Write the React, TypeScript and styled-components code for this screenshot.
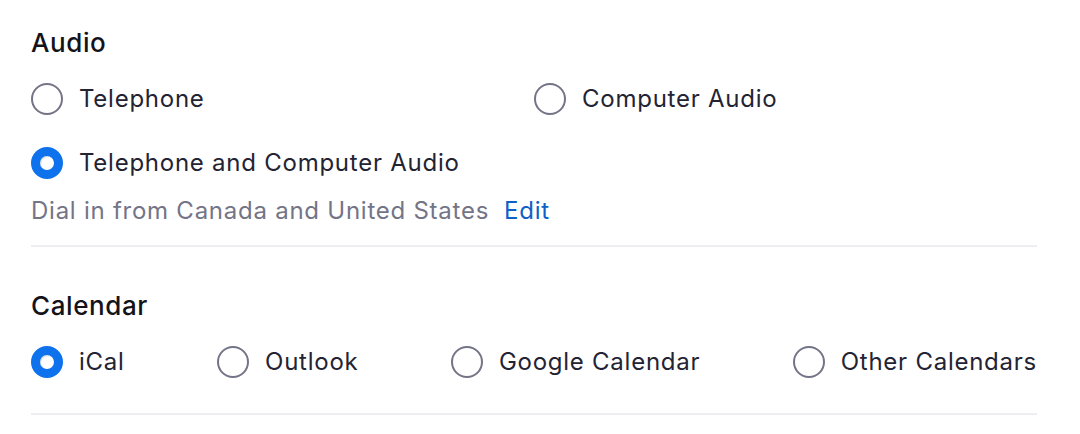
import styled, { createGlobalStyle } from "styled-components";

const GlobalStyle = createGlobalStyle`
	body {
		margin: 0;
		background: #ffffff;
		font-family: Inter, "Liberation Sans", sans-serif;
		color: #232333;
	}
`;

type RadioPropsType = {
	label: string;
	checked?: boolean;
};

const Radio = (props: RadioPropsType) => {
	return (
		<Option>
			<Circle $checked={!!props.checked} />
			<Label>{props.label}</Label>
		</Option>
	);
};

export default function App() {
	return (
		<>
			<GlobalStyle />
			<Page>
				<Section>
					<Heading>Audio</Heading>
					<AudioGrid>
						<Radio label="Telephone" />
						<Radio label="Computer Audio" />
						<Radio label="Telephone and Computer Audio" checked />
					</AudioGrid>
					<Note>
						Dial in from Canada and United States
						<EditLink href="#">Edit</EditLink>
					</Note>
				</Section>
				<Section>
					<Heading>Calendar</Heading>
					<CalendarRow>
						<Radio label="iCal" checked />
						<Radio label="Outlook" />
						<Radio label="Google Calendar" />
						<Radio label="Other Calendars" />
					</CalendarRow>
				</Section>
			</Page>
		</>
	);
}

const Page = styled.div`
	width: 1006px;
	padding: 27px 0 0 31px;
`;

const Section = styled.section`
	border-bottom: 2px solid #ededf4;
	padding-bottom: 18px;
	& + & {
		padding-top: 43px;
		padding-bottom: 35px;
	}
`;

const Heading = styled.h2`
	margin: 0 0 24px;
	font-size: 26px;
	font-weight: 500;
	line-height: 32px;
	letter-spacing: 0.6px;
	color: #131319;
`;

const AudioGrid = styled.div`
	display: grid;
	grid-template-columns: 1fr 1fr;
	row-gap: 32px;
`;

const CalendarRow = styled.div`
	display: flex;
	justify-content: space-between;
`;

const Option = styled.label`
	display: flex;
	align-items: center;
	gap: 16px;
	height: 32px;
	cursor: pointer;
`;

const Circle = styled.span<{ $checked: boolean }>`
	box-sizing: border-box;
	flex: none;
	width: 32px;
	height: 32px;
	border-radius: 50%;
	background: #ffffff;
	border: ${(p) => (p.$checked ? "9.5px solid #0e72ed" : "2px solid #747487")};
	box-shadow: ${(p) => (p.$checked ? "inset 1px 1px 1px rgba(0,0,0,0.15)" : "none")};
`;

const Label = styled.span`
	font-size: 24px;
	line-height: 32px;
	letter-spacing: 0.75px;
	color: #232333;
`;

const Note = styled.div`
	margin-top: 16px;
	font-size: 24px;
	line-height: 32px;
	letter-spacing: 0.75px;
	color: #747487;
`;

const EditLink = styled.a`
	margin-left: 15px;
	color: #0e5fc7;
	text-decoration: none;
`;
